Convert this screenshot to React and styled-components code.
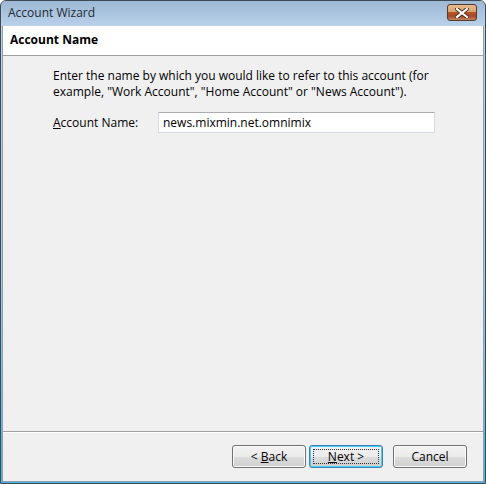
import React from "react";
import styled, { createGlobalStyle } from "styled-components";

const GlobalStyle = createGlobalStyle`
  html, body {
    margin: 0;
    padding: 0;
    background: #ffffff;
  }
  body {
    font-family: "Open Sans", "Noto Sans", sans-serif;
    font-size: 12px;
    color: #000;
  }
`;

const App = () => {
  return (
    <>
      <GlobalStyle />
      <Window>
        <TitleBar>
          <Title>Account Wizard</Title>
          <CloseButton aria-label="Close">
            <svg width="14" height="10" viewBox="0 0 14 10">
              <path
                d="M2 1 L12 9 M12 1 L2 9"
                stroke="#4a2a1a"
                strokeWidth="4"
                strokeLinecap="square"
              />
              <path
                d="M2 1 L12 9 M12 1 L2 9"
                stroke="#ffffff"
                strokeWidth="2.2"
                strokeLinecap="square"
              />
            </svg>
          </CloseButton>
        </TitleBar>
        <Client>
          <Header>Account Name</Header>
          <Body>
            <Intro>
              Enter the name by which you would like to refer to this account (for
              example, "Work Account", "Home Account" or "News Account").
            </Intro>
            <FieldRow>
              <Label>
                <u>A</u>ccount Name:
              </Label>
              <TextInput defaultValue="news.mixmin.net.omnimix" />
            </FieldRow>
          </Body>
          <Footer>
            <Button>
              <span>
                {"< "}
                <u>B</u>ack
              </span>
            </Button>
            <Button $default>
              <Focus>
                <span>
                  <u>N</u>ext {">"}
                </span>
              </Focus>
            </Button>
            <Button $spaced>
              <span>Cancel</span>
            </Button>
          </Footer>
        </Client>
      </Window>
    </>
  );
};

const Window = styled.div`
  box-sizing: border-box;
  width: 486px;
  height: 484px;
  display: flex;
  flex-direction: column;
  border: 1px solid #3d4a55;
  border-radius: 6px 6px 0 0;
  background: linear-gradient(to bottom, #a8c2dc 0, #bcd4ea 26px, #9ccbe6 60%, #3fb6e6 100%);
  padding: 0 1px 1px 1px;
  overflow: hidden;
`;

const TitleBar = styled.div`
  height: 25px;
  flex-shrink: 0;
  display: flex;
  align-items: center;
  justify-content: space-between;
  padding: 0 7px 0 6px;
  background: linear-gradient(to bottom, #9fb8d3 0%, #a9c3de 45%, #b9d1e9 100%);
`;

const Title = styled.span`
  font-size: 12px;
  color: #1e2a36;
  padding-bottom: 2px;
`;

const CloseButton = styled.button`
  box-sizing: border-box;
  width: 30px;
  height: 17px;
  margin-bottom: 2px;
  padding: 0;
  display: flex;
  align-items: center;
  justify-content: center;
  border: 1px solid #4e3d34;
  border-radius: 3px;
  background: linear-gradient(
    to bottom,
    #e8b98e 0%,
    #d9a26f 45%,
    #b4562a 50%,
    #a8472a 75%,
    #c48760 100%
  );
`;

const Client = styled.div`
  flex: 1;
  display: flex;
  flex-direction: column;
  background: #f0f0f0;
  border: 1px solid #8e9eae;
  border-top: none;
`;

const Header = styled.div`
  height: 30px;
  flex-shrink: 0;
  display: flex;
  align-items: center;
  padding: 0 0 2px 7px;
  box-sizing: border-box;
  background: #ffffff;
  border-bottom: 1px solid #a0a0a0;
  font-weight: 700;
  font-size: 12px;
`;

const Body = styled.div`
  flex: 1;
  padding: 12px 40px 0 50px;
  display: flex;
  flex-direction: column;
  gap: 12px;
`;

const Intro = styled.p`
  margin: 0;
  line-height: 16px;
`;

const FieldRow = styled.div`
  display: flex;
  align-items: center;
`;

const Label = styled.span`
  width: 105px;
`;

const TextInput = styled.input`
  box-sizing: border-box;
  width: 277px;
  height: 21px;
  padding: 0 4px;
  font-family: inherit;
  font-size: 12px;
  color: #000;
  background: #fff;
  border: 1px solid #d5dbe1;
  border-top-color: #abadb3;
  outline: none;
`;

const Footer = styled.div`
  height: 50px;
  flex-shrink: 0;
  box-sizing: border-box;
  border-top: 1px solid #a0a0a0;
  box-shadow: inset 0 1px 0 #ffffff;
  display: flex;
  align-items: center;
  justify-content: flex-end;
  padding: 0 16px 0 0;
  gap: 3px;
`;

const Button = styled.button`
  box-sizing: border-box;
  width: 74px;
  height: 23px;
  margin-left: ${(p) => (p.$spaced ? "7px" : "0")};
  padding: 0;
  font-family: inherit;
  font-size: 12px;
  color: #000;
  border-radius: 3px;
  border: 1px solid ${(p) => (p.$default ? "#3c7fb1" : "#707070")};
  background: linear-gradient(to bottom, #f2f2f2 0%, #ebebeb 50%, #dddddd 51%, #cfcfcf 100%);
  box-shadow: inset 0 0 0 1px ${(p) => (p.$default ? "#48d0f7" : "#fcfcfc")};
  display: flex;
  align-items: center;
  justify-content: center;
`;

const Focus = styled.span`
  box-sizing: border-box;
  display: flex;
  align-items: center;
  justify-content: center;
  width: 66px;
  height: 15px;
  border: 1px dotted #333;
`;

export default App;
